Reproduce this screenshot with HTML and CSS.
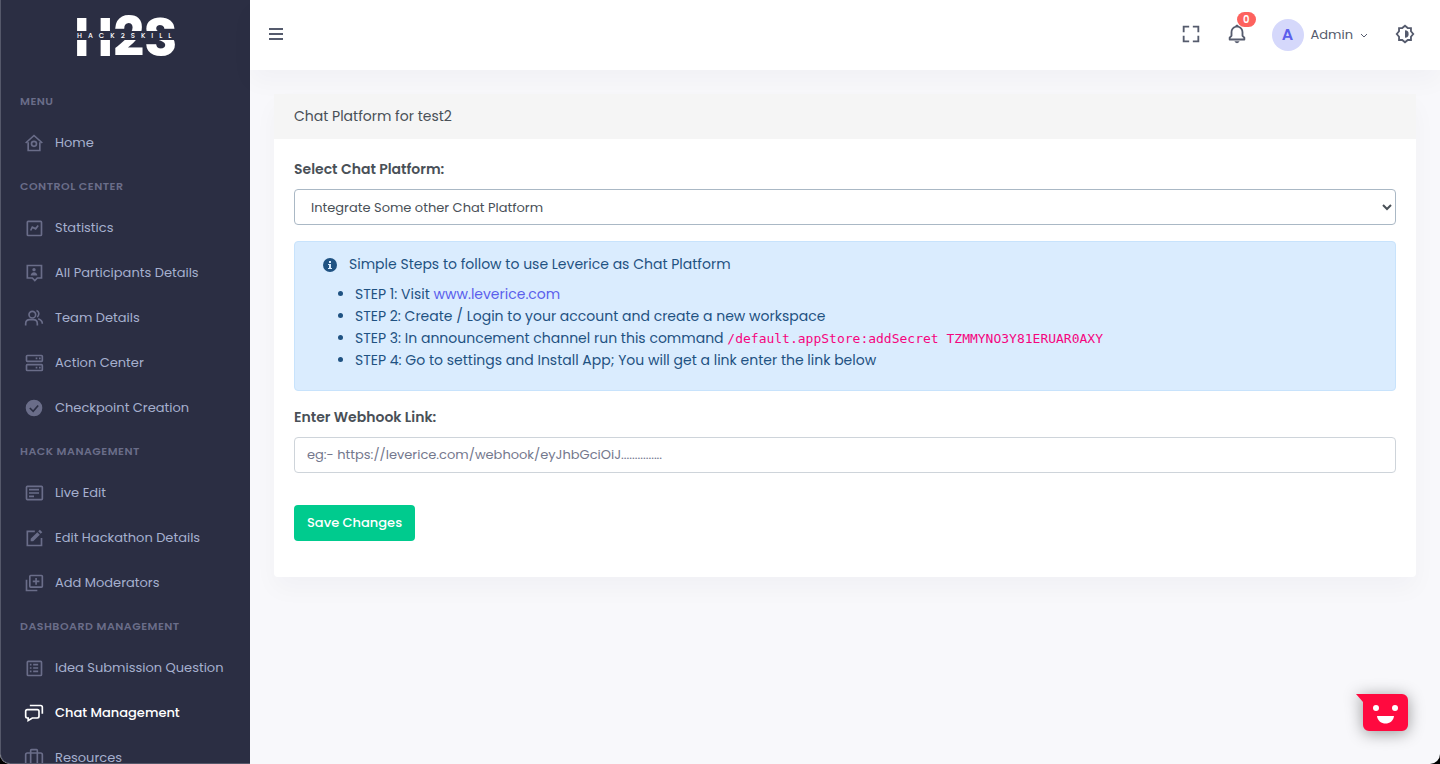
FILE: index.html
```html
<!DOCTYPE html>
<html lang="en">
<head>
    <meta charset="UTF-8">
    <meta name="viewport" content="width=device-width, initial-scale=1.0">
    <title>Chat Management</title>
    <link rel="stylesheet" href="styles.css">
</head>
<body>
    <div class="layout">
        <aside class="sidebar">
            <a class="logo" href="#">
                <span class="logo-big">H2S</span>
                <span class="logo-strip">HACK2SKILL</span>
            </a>

            <nav class="menu">
                <h2 class="menu-title">Menu</h2>
                <a href="#">
                    <svg class="icon" viewBox="0 0 24 24"><path d="M5 11v10h14V11M2 12 12 3l10 9"/><circle cx="12" cy="13" r="3"/></svg>
                    Home
                </a>

                <h2 class="menu-title">Control Center</h2>
                <a href="#">
                    <svg class="icon" viewBox="0 0 24 24"><rect x="4" y="4" width="17" height="17" rx="1"/><path d="M8 15l2-4 4 2 3-4"/></svg>
                    Statistics
                </a>
                <a href="#">
                    <svg class="icon" viewBox="0 0 24 24"><path d="M4 3h17v15h-5l-3 3-3-3H4z"/><circle class="solid" cx="12" cy="8" r="2"/><path class="solid" d="M8 15c0-2 2-4 4-4s4 2 4 4z"/></svg>
                    All Participants Details
                </a>
                <a href="#">
                    <svg class="icon" viewBox="0 0 24 24"><circle cx="10" cy="8" r="4"/><path d="M2 21v-2c0-3 2-5 5-5h4c3 0 5 2 5 5v2M15 3c3 1 4 5 1 8M17 13c3 1 5 3 5 6"/></svg>
                    Team Details
                </a>
                <a href="#">
                    <svg class="icon" viewBox="0 0 24 24"><rect x="3" y="3" width="19" height="7" rx="1"/><rect x="3" y="14" width="19" height="7" rx="1"/><path d="M14 6.500h2M18 6.500h2M14 17.500h2M18 17.500h2"/></svg>
                    Action Center
                </a>
                <a href="#">
                    <svg class="icon" viewBox="0 0 24 24"><circle class="solid" cx="12" cy="12" r="10"/><path class="tick" d="M7 12l4 4 6-7"/></svg>
                    Checkpoint Creation
                </a>

                <h2 class="menu-title">Hack Management</h2>
                <a href="#">
                    <svg class="icon" viewBox="0 0 24 24"><rect x="3" y="4" width="19" height="16" rx="1"/><path d="M6 8h12M6 12h12M6 16h6"/></svg>
                    Live Edit
                </a>
                <a href="#">
                    <svg class="icon" viewBox="0 0 24 24"><path d="M13 4H4v17h17v-9"/><path class="solid" d="M8 13l8-8 3 3-8 8H8zM17 4l2-2 3 3-2 2z"/></svg>
                    Edit Hackathon Details
                </a>
                <a href="#">
                    <svg class="icon" viewBox="0 0 24 24"><rect x="7" y="3" width="15" height="14" rx="1"/><path d="M3 8v13h13M14.500 6v8M10.500 10h8"/></svg>
                    Add Moderators
                </a>

                <h2 class="menu-title">Dashboard Management</h2>
                <a href="#">
                    <svg class="icon" viewBox="0 0 24 24"><rect x="4" y="4" width="17" height="17" rx="1"/><path d="M7 8h2M7 12h2M7 16h2M11 8h6M11 12h6M11 16h6"/></svg>
                    Idea Submission Question
                </a>
                <a class="active" href="#">
                    <svg class="icon" viewBox="0 0 24 24"><path d="M4 8h12c1 0 2 1 2 2v6c0 1-1 2-2 2h-6l-5 3v-3H4c-1 0-2-1-2-2v-6c0-1 1-2 2-2zM7 3h13c1 0 2 1 2 2v8"/></svg>
                    Chat Management
                </a>
                <a href="#">
                    <svg class="icon" viewBox="0 0 24 24"><rect x="2" y="6" width="20" height="15" rx="2"/><path d="M8 21V3c0-1 1-1 1-1h6c1 0 1 1 1 1v18"/></svg>
                    Resources
                </a>
            </nav>
        </aside>

        <div class="page">
            <header class="topbar">
                <button class="icon-btn" type="button" aria-label="Toggle menu">
                    <svg class="burger" viewBox="0 0 14 12"><path d="M0 1h14M0 6h14M0 11h14"/></svg>
                </button>
                <div class="topbar-right">
                    <button class="icon-btn" type="button" aria-label="Fullscreen">
                        <svg class="top-icon" viewBox="0 0 24 24"><path d="M5 5h5V3H3v7h2zm5 14H5v-5H3v7h7zm11-5h-2v5h-5v2h7zm-2-4h2V3h-7v2h5z"/></svg>
                    </button>
                    <button class="icon-btn bell" type="button" aria-label="Notifications">
                        <svg class="top-icon" viewBox="0 0 24 24"><path d="M19 13.586V10c0-3.217-2.185-5.927-5.145-6.742C13.562 2.520 12.846 2 12 2s-1.562.52-1.855 1.258C7.185 4.074 5 6.783 5 10v3.586l-1.707 1.707A.996.996 0 0 0 3 16v2a1 1 0 0 0 1 1h16a1 1 0 0 0 1-1v-2a.996.996 0 0 0-.293-.707L19 13.586zM19 17H5v-.586l1.707-1.707A.996.996 0 0 0 7 14v-4c0-2.757 2.243-5 5-5s5 2.243 5 5v4c0 .266.105.52.293.707L19 16.414V17zm-7 5a2.980 2.980 0 0 0 2.818-2H9.182A2.980 2.980 0 0 0 12 22z"/></svg>
                        <span class="badge">0</span>
                    </button>
                    <button class="user" type="button">
                        <span class="avatar">A</span>
                        Admin
                        <svg class="chevron" viewBox="0 0 8 8"><path d="M1 3l3 3 3-3"/></svg>
                    </button>
                    <button class="icon-btn" type="button" aria-label="Theme">
                        <svg class="top-icon" viewBox="0 0 24 24"><path class="ring" d="M12 3l3 2.500 3.500 0 0 3.500L21 12l-2.500 3 0 3.500-3.500 0L12 21l-3-2.500-3.500 0 0-3.500L3 12l2.500-3 0-3.500 3.500 0z"/><path d="M12 8a4 4 0 0 1 0 8z"/></svg>
                    </button>
                </div>
            </header>

            <main class="content">
                <section class="card">
                    <h1 class="card-header">Chat Platform for test2</h1>
                    <form class="card-body">
                        <label for="platform">Select Chat Platform:</label>
                        <select id="platform" class="control">
                            <option>Integrate Some other Chat Platform</option>
                        </select>

                        <div class="alert">
                            <p class="alert-title">
                                <svg class="info" viewBox="0 0 14 14"><circle cx="7" cy="7" r="7"/><path d="M6 3h2v2H6zM5 6h3v4h1v1H5v-1h1V7H5z"/></svg>
                                Simple Steps to follow to use Leverice as Chat Platform
                            </p>
                            <ul>
                                <li>STEP 1: Visit <a href="#">www.leverice.com</a></li>
                                <li>STEP 2: Create / Login to your account and create a new workspace</li>
                                <li>STEP 3: In announcement channel run this command <code>/default.appStore:addSecret TZMMYNO3Y81ERUAR0AXY</code></li>
                                <li>STEP 4: Go to settings and Install App; You will get a link enter the link below</li>
                            </ul>
                        </div>

                        <label for="webhook">Enter Webhook Link:</label>
                        <input id="webhook" class="control" type="text" placeholder="eg:- https://leverice.com/webhook/eyJhbGciOiJ...............">
                        <button class="save-btn" type="button">Save Changes</button>
                    </form>
                </section>
            </main>
        </div>
    </div>

    <button class="chat-widget" type="button" aria-label="Open chat">
        <svg viewBox="0 0 52 37"><path class="bubble" d="M0 0h46a6 6 0 0 1 6 6v25a6 6 0 0 1-6 6H13a6 6 0 0 1-6-6V8z"/><circle cx="20" cy="14" r="3"/><circle cx="39" cy="14" r="3"/><path d="M21 22h17c-1 10-16 10-17 0z"/></svg>
    </button>
</body>
</html>
```
FILE: styles.css
```css
* {
    box-sizing: border-box;
}
html {
    background-color: #000;
}
body {
    margin: 0;
    font-family: Poppins, Inter, sans-serif;
    font-size: 14px;
    line-height: 21px;
    color: #495057;
}
button, input, select {
    font-family: inherit;
}
.layout {
    display: flex;
    height: 100vh;
    overflow: hidden;
    border-radius: 0 0 10px 10px;
    background-color: #f8f8fb;
}

/* Sidebar */
.sidebar {
    flex: 0 0 250px;
    overflow: hidden;
    background-color: #2b2e43;
    border-left: 1px solid #55586a;
    border-bottom: 1px solid #55586a;
    border-bottom-left-radius: 10px;
}
.logo {
    position: relative;
    display: flex;
    justify-content: center;
    align-items: center;
    height: 74px;
    margin-bottom: 6px;
    color: white;
    text-decoration: none;
}
.logo-big {
    font-size: 54px;
    font-weight: 700;
    line-height: 74px;
}
.logo-strip {
    position: absolute;
    top: 31px;
    left: 68px;
    width: 114px;
    padding-left: 8px;
    font-size: 7px;
    font-weight: 500;
    line-height: 9px;
    letter-spacing: 6px;
    background-color: #2b2e43;
}
.menu-title {
    margin: 0;
    padding: 12px 19px 10px;
    font-size: 11px;
    font-weight: 600;
    line-height: 18px;
    letter-spacing: 0.5px;
    text-transform: uppercase;
    color: #6a6d89;
}
.menu a {
    display: flex;
    align-items: center;
    gap: 11px;
    height: 45px;
    padding: 0 23px;
    font-size: 13px;
    color: #a6b0cf;
    text-decoration: none;
    white-space: nowrap;
}
.menu a:hover, .menu a.active {
    color: white;
}
.menu a.active {
    font-weight: 500;
}
.icon {
    width: 20px;
    height: 20px;
    fill: none;
    stroke: #6a6d89;
    stroke-width: 2;
}
.icon .solid {
    fill: #6a6d89;
    stroke: none;
}
.icon .tick {
    stroke: #2b2e43;
}
.active .icon {
    stroke: white;
}

/* Top bar */
.page {
    flex: 1;
    min-width: 0;
}
.topbar {
    display: flex;
    justify-content: space-between;
    align-items: center;
    height: 70px;
    padding: 0 24px 0 19px;
    background-color: white;
    box-shadow: 0 12px 24px rgba(18, 38, 63, 0.03);
}
.topbar-right {
    display: flex;
    align-items: center;
    gap: 24px;
}
.icon-btn, .user, .chat-widget {
    padding: 0;
    border: none;
    background: none;
    cursor: pointer;
}
.icon-btn {
    display: flex;
    padding-bottom: 2px;
}
.burger {
    width: 14px;
    height: 12px;
    stroke: #555b6d;
    stroke-width: 2;
}
.top-icon {
    width: 22px;
    height: 22px;
    fill: #555b6d;
}
.top-icon .ring {
    fill: none;
    stroke: #555b6d;
    stroke-width: 2;
}
.bell {
    position: relative;
}
.badge {
    position: absolute;
    top: -11px;
    right: -8px;
    padding: 0 6px;
    border-radius: 8px;
    font-size: 10px;
    font-weight: 600;
    line-height: 15px;
    color: white;
    background-color: #fd625e;
}
.user {
    display: flex;
    align-items: center;
    gap: 7px;
    margin-right: 2px;
    font-size: 13px;
    color: #555b6d;
}
.avatar {
    width: 32px;
    height: 32px;
    border-radius: 50%;
    font-size: 16px;
    font-weight: 600;
    line-height: 32px;
    color: #5b5fec;
    background-color: #d5d8fb;
}
.chevron {
    width: 8px;
    height: 8px;
    fill: none;
    stroke: #555b6d;
}

/* Content */
.content {
    padding: 24px;
}
.card {
    border-radius: 4px;
    background-color: white;
    box-shadow: 0 12px 24px rgba(18, 38, 63, 0.03);
}
.card-header {
    margin: 0;
    padding: 12px 20px;
    font-size: 14px;
    font-weight: 400;
    line-height: 21px;
    background-color: #f5f5f5;
}
.card-body {
    padding: 19px 20px 36px;
}
.card-body label {
    display: block;
    margin-bottom: 9px;
    font-weight: 600;
    line-height: 22px;
}
.control {
    display: block;
    width: 100%;
    height: 36px;
    padding: 0 12px;
    border: 1px solid #ced4da;
    border-radius: 4px;
    font-size: 13px;
    color: #495057;
    background-color: white;
}
select.control {
    border-color: #aab8c5;
}
.control::placeholder {
    color: #74788d;
}
.alert {
    margin: 16px 0 15px;
    padding: 12px 20px 19px;
    border: 1px solid #c8e3fc;
    border-radius: 4px;
    color: #1f5282;
    background-color: #daecfe;
}
.alert-title {
    display: flex;
    align-items: center;
    gap: 12px;
    margin: 0 8px 8px;
}
.info {
    width: 14px;
    height: 14px;
    fill: #1f5282;
}
.info path {
    fill: #daecfe;
}
.alert ul {
    margin: 0;
    padding-left: 40px;
    line-height: 22px;
}
.alert a {
    color: #5b5fec;
    text-decoration: none;
}
.alert code {
    font-family: "DejaVu Sans Mono", monospace;
    font-size: 13px;
    line-height: 1;
    color: #f5057e;
}
.save-btn {
    height: 36px;
    margin-top: 32px;
    padding: 0 13px;
    border: none;
    border-radius: 4px;
    font-size: 13px;
    font-weight: 500;
    color: white;
    background-color: #00cb8e;
    cursor: pointer;
}
.save-btn:hover {
    background-color: #00b57f;
}

/* Chat widget sits above the page */
.chat-widget {
    position: fixed;
    right: 32px;
    bottom: 33px;
    display: flex;
    filter: drop-shadow(0 2px 8px rgba(0, 0, 0, 0.4));
}
.chat-widget svg {
    width: 52px;
    height: 37px;
    fill: white;
}
.chat-widget .bubble {
    fill: #ff0a3f;
}
```
